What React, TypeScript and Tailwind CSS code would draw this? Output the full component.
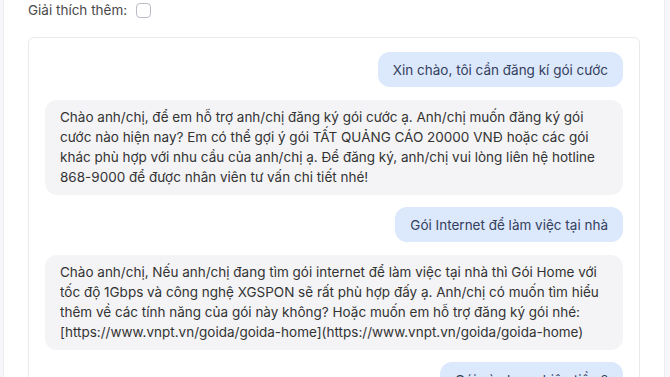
import React from "react";

const font = { fontFamily: "Inter, 'Noto Sans', sans-serif" };

function UserMsg({ children }: { children: React.ReactNode }) {
  return (
    <div className="flex justify-end">
      <div className="rounded-xl bg-[#dce8fb] px-[15px] py-[7.5px] text-[13.5px] leading-5 text-[#34405e]">
        {children}
      </div>
    </div>
  );
}

function BotMsg({ children }: { children: React.ReactNode }) {
  return (
    <div className="flex justify-start">
      <div className="w-full rounded-xl bg-[#f4f4f6] px-[15px] py-[7.5px] text-[13.5px] leading-5 text-[#333333]">
        {children}
      </div>
    </div>
  );
}

export default function App() {
  return (
    <div className="h-[377px] w-[670px] overflow-hidden bg-[#f7f7fb]" style={font}>
      <div className="ml-[3px] mr-[5px] h-full border-x border-[#ececf1] bg-white px-6">
        <div className="flex h-5 items-center gap-[9px] text-[13.5px] leading-5 text-[#4a4a4a]">
          <span>Giải thích thêm:</span>
          <span className="inline-block h-[15px] w-[15px] rounded-[4px] border border-[#b9bcc4] bg-white" />
        </div>
        <div className="mt-[17px] flex flex-col gap-[12.5px] rounded-md border border-[#e9e9ee] px-4 pb-4 pt-[14px]">
          <UserMsg>Xin chào, tôi cần đăng kí gói cước</UserMsg>
          <BotMsg>
            Chào anh/chị, để em hỗ trợ anh/chị đăng ký gói cước ạ. Anh/chị muốn đăng ký gói cước nào hiện nay? Em có thể gợi ý gói TẤT QUẢNG CÁO 20000 VNĐ hoặc các gói khác phù hợp với nhu cầu của anh/chị ạ. Để đăng ký, anh/chị vui lòng liên hệ hotline 868-9000 để được nhân viên tư vấn chi tiết nhé!
          </BotMsg>
          <UserMsg>Gói Internet để làm việc tại nhà</UserMsg>
          <BotMsg>
            Chào anh/chị, Nếu anh/chị đang tìm gói internet để làm việc tại nhà thì Gói Home với tốc độ 1Gbps và công nghệ XGSPON sẽ rất phù hợp đấy ạ. Anh/chị có muốn tìm hiểu thêm về các tính năng của gói này không? Hoặc muốn em hỗ trợ đăng ký gói nhé: [https://www.vnpt.vn/goida/goida-home](https://www.vnpt.vn/goida/goida-home)
          </BotMsg>
          <UserMsg>Gói này bao nhiêu tiền ?</UserMsg>
        </div>
      </div>
    </div>
  );
}
